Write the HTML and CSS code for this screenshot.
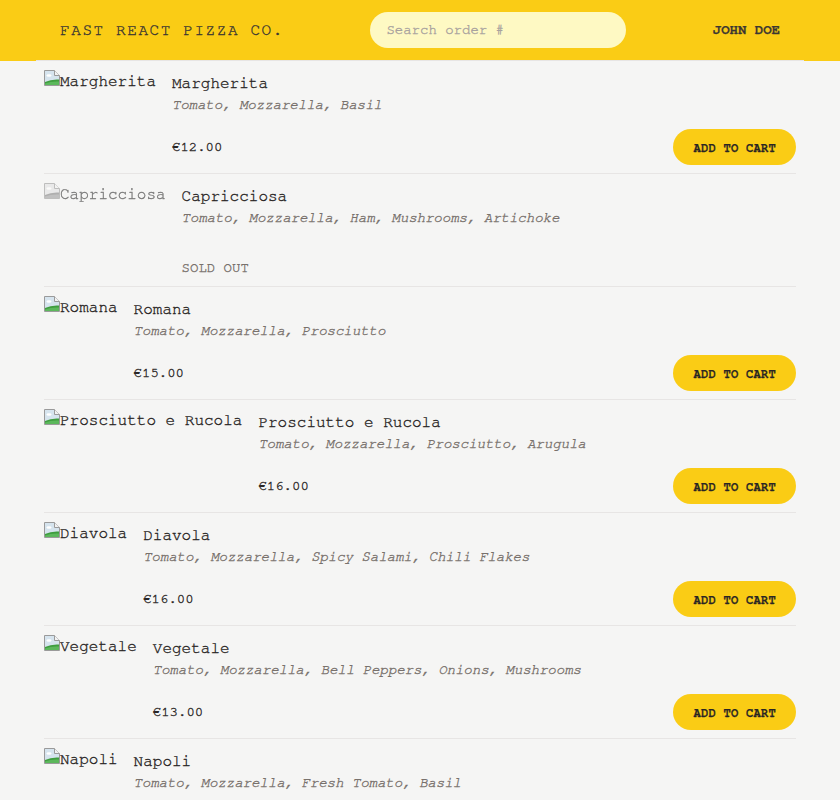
FILE: index.html
```html
<!DOCTYPE html>
<html lang="en">
<head>
<meta charset="utf-8">
<title>Fast React Pizza Co.</title>
<link rel="stylesheet" href="styles.css">
</head>
<body>
<header class="header">
  <a class="logo" href="#">Fast React Pizza Co.</a>
  <input class="search" type="text" placeholder="Search order #">
  <div class="user">John Doe</div>
</header>
<main class="main">
  <ul class="menu">
    <li class="pizza">
      <div class="pic"><svg class="broken" width="16" height="16" viewBox="0 0 16 16"><path d="M0.5 0.5H10.5L15.5 5.5V15.5H0.5Z" fill="#d6e4ee" stroke="#9a9a9a"/><path d="M1 15V12Q7 9 15 9.5V15Z" fill="#3f9d3f"/><path d="M1 15V13.5Q7 11 15 11.5V15Z" fill="#5cb85c"/><ellipse cx="5" cy="5.5" rx="2.6" ry="1.3" fill="#fff"/><path d="M10.5 0.5V5.5H15.5" fill="#f2f2f2" stroke="#9a9a9a"/></svg><span class="alt">Margherita</span></div>
      <div class="info">
        <p class="name">Margherita</p>
        <p class="ingredients">Tomato, Mozzarella, Basil</p>
        <div class="row"><p class="price">€12.00</p><button class="btn">Add to cart</button></div>
      </div>
    </li>
    <li class="pizza">
      <div class="pic soldout"><svg class="broken" width="16" height="16" viewBox="0 0 16 16"><path d="M0.5 0.5H10.5L15.5 5.5V15.5H0.5Z" fill="#d6e4ee" stroke="#9a9a9a"/><path d="M1 15V12Q7 9 15 9.5V15Z" fill="#3f9d3f"/><path d="M1 15V13.5Q7 11 15 11.5V15Z" fill="#5cb85c"/><ellipse cx="5" cy="5.5" rx="2.6" ry="1.3" fill="#fff"/><path d="M10.5 0.5V5.5H15.5" fill="#f2f2f2" stroke="#9a9a9a"/></svg><span class="alt">Capricciosa</span></div>
      <div class="info">
        <p class="name">Capricciosa</p>
        <p class="ingredients">Tomato, Mozzarella, Ham, Mushrooms, Artichoke</p>
        <div class="row"><p class="sold">Sold out</p></div>
      </div>
    </li>
    <li class="pizza">
      <div class="pic"><svg class="broken" width="16" height="16" viewBox="0 0 16 16"><path d="M0.5 0.5H10.5L15.5 5.5V15.5H0.5Z" fill="#d6e4ee" stroke="#9a9a9a"/><path d="M1 15V12Q7 9 15 9.5V15Z" fill="#3f9d3f"/><path d="M1 15V13.5Q7 11 15 11.5V15Z" fill="#5cb85c"/><ellipse cx="5" cy="5.5" rx="2.6" ry="1.3" fill="#fff"/><path d="M10.5 0.5V5.5H15.5" fill="#f2f2f2" stroke="#9a9a9a"/></svg><span class="alt">Romana</span></div>
      <div class="info">
        <p class="name">Romana</p>
        <p class="ingredients">Tomato, Mozzarella, Prosciutto</p>
        <div class="row"><p class="price">€15.00</p><button class="btn">Add to cart</button></div>
      </div>
    </li>
    <li class="pizza">
      <div class="pic"><svg class="broken" width="16" height="16" viewBox="0 0 16 16"><path d="M0.5 0.5H10.5L15.5 5.5V15.5H0.5Z" fill="#d6e4ee" stroke="#9a9a9a"/><path d="M1 15V12Q7 9 15 9.5V15Z" fill="#3f9d3f"/><path d="M1 15V13.5Q7 11 15 11.5V15Z" fill="#5cb85c"/><ellipse cx="5" cy="5.5" rx="2.6" ry="1.3" fill="#fff"/><path d="M10.5 0.5V5.5H15.5" fill="#f2f2f2" stroke="#9a9a9a"/></svg><span class="alt">Prosciutto e Rucola</span></div>
      <div class="info">
        <p class="name">Prosciutto e Rucola</p>
        <p class="ingredients">Tomato, Mozzarella, Prosciutto, Arugula</p>
        <div class="row"><p class="price">€16.00</p><button class="btn">Add to cart</button></div>
      </div>
    </li>
    <li class="pizza">
      <div class="pic"><svg class="broken" width="16" height="16" viewBox="0 0 16 16"><path d="M0.5 0.5H10.5L15.5 5.5V15.5H0.5Z" fill="#d6e4ee" stroke="#9a9a9a"/><path d="M1 15V12Q7 9 15 9.5V15Z" fill="#3f9d3f"/><path d="M1 15V13.5Q7 11 15 11.5V15Z" fill="#5cb85c"/><ellipse cx="5" cy="5.5" rx="2.6" ry="1.3" fill="#fff"/><path d="M10.5 0.5V5.5H15.5" fill="#f2f2f2" stroke="#9a9a9a"/></svg><span class="alt">Diavola</span></div>
      <div class="info">
        <p class="name">Diavola</p>
        <p class="ingredients">Tomato, Mozzarella, Spicy Salami, Chili Flakes</p>
        <div class="row"><p class="price">€16.00</p><button class="btn">Add to cart</button></div>
      </div>
    </li>
    <li class="pizza">
      <div class="pic"><svg class="broken" width="16" height="16" viewBox="0 0 16 16"><path d="M0.5 0.5H10.5L15.5 5.5V15.5H0.5Z" fill="#d6e4ee" stroke="#9a9a9a"/><path d="M1 15V12Q7 9 15 9.5V15Z" fill="#3f9d3f"/><path d="M1 15V13.5Q7 11 15 11.5V15Z" fill="#5cb85c"/><ellipse cx="5" cy="5.5" rx="2.6" ry="1.3" fill="#fff"/><path d="M10.5 0.5V5.5H15.5" fill="#f2f2f2" stroke="#9a9a9a"/></svg><span class="alt">Vegetale</span></div>
      <div class="info">
        <p class="name">Vegetale</p>
        <p class="ingredients">Tomato, Mozzarella, Bell Peppers, Onions, Mushrooms</p>
        <div class="row"><p class="price">€13.00</p><button class="btn">Add to cart</button></div>
      </div>
    </li>
    <li class="pizza">
      <div class="pic"><svg class="broken" width="16" height="16" viewBox="0 0 16 16"><path d="M0.5 0.5H10.5L15.5 5.5V15.5H0.5Z" fill="#d6e4ee" stroke="#9a9a9a"/><path d="M1 15V12Q7 9 15 9.5V15Z" fill="#3f9d3f"/><path d="M1 15V13.5Q7 11 15 11.5V15Z" fill="#5cb85c"/><ellipse cx="5" cy="5.5" rx="2.6" ry="1.3" fill="#fff"/><path d="M10.5 0.5V5.5H15.5" fill="#f2f2f2" stroke="#9a9a9a"/></svg><span class="alt">Napoli</span></div>
      <div class="info">
        <p class="name">Napoli</p>
        <p class="ingredients">Tomato, Mozzarella, Fresh Tomato, Basil</p>
        <div class="row"><p class="price">€16.00</p><button class="btn">Add to cart</button></div>
      </div>
    </li>
  </ul>
</main>
</body>
</html>
```

FILE: styles.css
```css
* { box-sizing: border-box; }
html, body { margin: 0; padding: 0; }
body {
  background: #f5f5f4;
  color: #292524;
  font-family: "Nimbus Mono PS", "FreeMono", "Courier New", "Liberation Mono", monospace;
  font-size: 16px;
  -webkit-text-stroke: 0.35px currentColor;
}
.header {
  display: flex;
  align-items: center;
  justify-content: space-between;
  height: 61px;
  padding: 0 60px;
  background: #facc15;
}
.logo {
  font-size: 16px;
  letter-spacing: 0.1em;
  text-transform: uppercase;
  color: #3a3632;
  text-decoration: none;
  margin-top: -1px;
}
.search {
  width: 256px;
  height: 36px;
  border: none;
  border-radius: 9999px;
  background: #fef9c3;
  padding: 0 16px;
  font-family: inherit;
  font-size: 14px;
  color: #292524;
  outline: none;
  margin-top: -1px;
  -webkit-text-stroke: 0.35px currentColor;
}
.search::placeholder { color: #a8a29e; -webkit-text-stroke: 0.35px #a8a29e; }
.user {
  font-size: 14px;
  font-weight: 700;
  text-transform: uppercase;
  color: #3a3632;
  margin-top: -1px;
  -webkit-text-stroke: 0.25px currentColor;
}
.main {
  max-width: 768px;
  margin: -1px auto 0;
  border-top: 1px solid #e7e5e4;
}
.menu {
  list-style: none;
  margin: 0;
  padding: 0 8px;
}
.pizza {
  display: flex;
  gap: 16px;
  padding: 8px 0;
  border-bottom: 1px solid #e7e5e4;
}
.pizza:last-child { border-bottom: none; }
.pic {
  display: flex;
  align-items: flex-start;
  height: 96px;
  line-height: 24px;
  white-space: nowrap;
}
.pic.soldout { opacity: 0.6; filter: grayscale(1); }
.broken { flex: none; margin-top: 1px; }
.info {
  display: flex;
  flex-direction: column;
  flex-grow: 1;
  padding-top: 2px;
}
.info p { margin: 0; }
.name { font-size: 16px; line-height: 24px; }
.ingredients {
  font-size: 14px;
  line-height: 20px;
  font-style: italic;
  color: #78716c;
}
.row {
  margin-top: auto;
  display: flex;
  align-items: center;
  justify-content: space-between;
}
.price { font-size: 14px; line-height: 20px; }
.sold {
  font-size: 14px;
  line-height: 20px;
  text-transform: uppercase;
  color: #78716c;
}
.btn {
  background: #facc15;
  border: none;
  border-radius: 9999px;
  height: 36px;
  padding: 1px 20px 0;
  font-family: inherit;
  font-size: 12px;
  font-weight: 700;
  letter-spacing: 0.025em;
  text-transform: uppercase;
  color: #292524;
  cursor: pointer;
  -webkit-text-stroke: 0.25px currentColor;
}
```
